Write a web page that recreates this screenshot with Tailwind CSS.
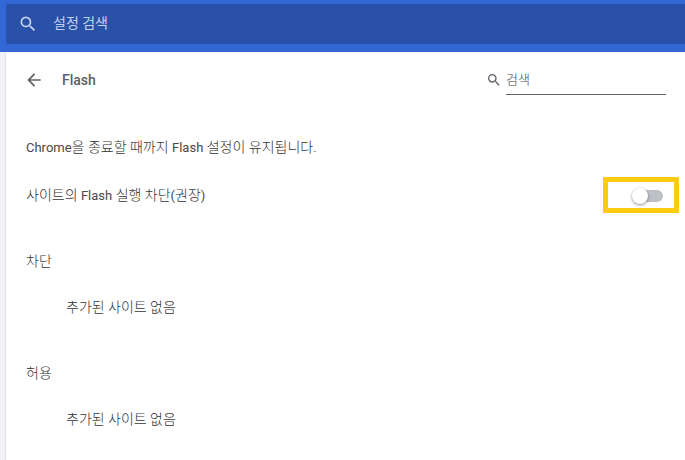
<!DOCTYPE html>
<html lang="ko">
<head>
    <meta charset="UTF-8">
    <title>Flash</title>
    <script src="https://cdn.jsdelivr.net/npm/@tailwindcss/browser@4"></script>
</head>
<body class="w-[685px] h-[460px] overflow-hidden bg-white text-[14px] text-[#333] font-['Roboto','Noto_Sans_CJK_KR',sans-serif]">
    <!-- top bar -->
    <header class="h-[52px] bg-[#3367d6] pl-[6px] pt-[4px]">
        <div class="h-[40px] bg-[#2a51a8] rounded-l-[2px] flex items-center pl-[12px] text-[#c5d2ec]">
            <svg class="w-[20px] h-[20px] fill-[#c5d2ec]" viewBox="0 0 24 24"><path d="M15.5 14h-.79l-.28-.27A6.47 6.47 0 0 0 16 9.5 6.5 6.5 0 1 0 9.5 16c1.61 0 3.09-.59 4.23-1.57l.27.28v.79l5 4.99L20.49 19l-4.99-5zm-6 0C7.01 14 5 11.99 5 9.5S7.01 5 9.5 5 14 7.01 14 9.5 11.99 14 9.5 14z"/></svg>
            <span class="ml-[15px] mb-[2px]">설정 검색</span>
        </div>
    </header>

    <div class="flex h-[408px]">
        <div class="w-[6px] bg-[#f1f2f4] border-r border-[#e2e3e6]"></div>
        <main class="flex-1 pl-[20px] pr-[19px]">
            <div class="h-[56px] flex items-center">
                <svg class="w-[20px] h-[20px] ml-[-2px] fill-[#5f6368]" viewBox="0 0 24 24"><path d="M20 11H7.83l5.59-5.59L12 4l-8 8 8 8 1.41-1.41L7.83 13H20v-2z"/></svg>
                <h1 class="ml-[18px] font-medium text-[#5a6066]">Flash</h1>
                <div class="ml-auto flex items-center">
                    <svg class="w-[16px] h-[16px] fill-[#5f6368]" viewBox="0 0 24 24"><path d="M15.5 14h-.79l-.28-.27A6.47 6.47 0 0 0 16 9.5 6.5 6.5 0 1 0 9.5 16c1.61 0 3.09-.59 4.23-1.57l.27.28v.79l5 4.99L20.49 19l-4.99-5zm-6 0C7.01 14 5 11.99 5 9.5S7.01 5 9.5 5 14 7.01 14 9.5 11.99 14 9.5 14z"/></svg>
                    <div class="ml-[4px] w-[160px] h-[28px] mt-[1px] border-b border-[#5f6368] text-[13px] font-light text-[#444] leading-[26px]">검색</div>
                </div>
            </div>

            <p class="mt-[29px] leading-[20px] font-light"><span class="text-[13px] font-normal text-[#484848]">Chrome</span>을 종료할 때까지 <span class="text-[13px] font-normal text-[#484848]">Flash</span> 설정이 유지됩니다.</p>

            <div class="mt-[19px] flex items-center justify-between h-[36px] mr-[-13px]">
                <span class="font-light">사이트의 <span class="text-[13px] font-normal text-[#484848]">Flash</span> 실행 차단<span class="text-[13px] font-normal text-[#484848]">(</span>권장<span class="text-[13px] font-normal text-[#484848]">)</span></span>
                <div class="w-[76px] h-[36px] border-[5px] border-[#ffcb0c] relative">
                    <div class="absolute left-[25px] top-[8px] w-[30px] h-[12px] rounded-full bg-[#bdc1c6]"></div>
                    <div class="absolute left-[24px] top-[6px] w-[16px] h-[16px] rounded-full bg-white shadow-[0_1px_3px_rgba(0,0,0,0.45)]"></div>
                </div>
            </div>

            <h2 class="mt-[38px] leading-[20px] font-light">차단</h2>
            <p class="mt-[26px] ml-[40px] leading-[20px] font-light">추가된 사이트 없음</p>

            <h2 class="mt-[46px] leading-[20px] font-light">허용</h2>
            <p class="mt-[26px] ml-[40px] leading-[20px] font-light">추가된 사이트 없음</p>
        </main>
    </div>
</body>
</html>
